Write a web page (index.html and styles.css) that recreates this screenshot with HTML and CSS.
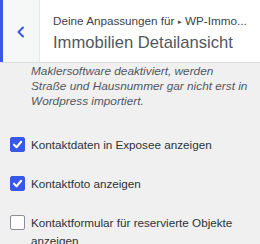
FILE: index.html
```html
<!DOCTYPE html>
<html lang="de">
<head>
<meta charset="utf-8">
<link rel="stylesheet" href="styles.css">
</head>
<body>
<div class="header">
  <div class="back">
    <svg width="10" height="14" viewBox="0 0 10 14"><path d="M7 2.5 L2.5 7 L7 11.5" fill="none" stroke="#3858e9" stroke-width="2" stroke-linecap="round" stroke-linejoin="round"/></svg>
  </div>
  <div class="titles">
    <div class="action">Deine Anpassungen für <span class="sep">▸</span> WP-Immo...</div>
    <div class="title">Immobilien Detailansicht</div>
  </div>
</div>
<div class="content">
  <p class="desc">Maklersoftware deaktiviert, werden Straße und Hausnummer gar nicht erst in Wordpress importiert.</p>
  <label class="row first"><span class="cb checked"><svg width="11" height="11" viewBox="0 0 12 12"><path d="M2.2 6.2 L5 9 L10 3" fill="none" stroke="#fff" stroke-width="2.2" stroke-linecap="round" stroke-linejoin="round"/></svg></span><span class="lbl">Kontaktdaten in Exposee anzeigen</span></label>
  <label class="row"><span class="cb checked"><svg width="11" height="11" viewBox="0 0 12 12"><path d="M2.2 6.2 L5 9 L10 3" fill="none" stroke="#fff" stroke-width="2.2" stroke-linecap="round" stroke-linejoin="round"/></svg></span><span class="lbl">Kontaktfoto anzeigen</span></label>
  <label class="row"><span class="cb"></span><span class="lbl">Kontaktformular für reservierte Objekte anzeigen</span></label>
</div>
</body>
</html>
```
FILE: styles.css
```css
html, body { margin: 0; padding: 0; }
body {
  width: 260px;
  height: 244px;
  overflow: hidden;
  background: #f0f0f1;
  font-family: "Liberation Sans", Arial, sans-serif;
  color: #1d2327;
}
.header {
  display: flex;
  height: 62px;
  background: #fff;
  border-bottom: 1px solid #dcdcde;
}
.back {
  flex: none;
  width: 36px;
  border-left: 3px solid #3858e9;
  border-right: 1px solid #e8e8ea;
  background: #f6f7f7;
  display: flex;
  align-items: center;
  justify-content: center;
}
.back svg { margin-left: -1px; margin-top: 1px; }
.titles {
  padding: 13px 0 0 13px;
  color: #50575e;
  white-space: nowrap;
  overflow: hidden;
}
.action { font-size: 11.7px; line-height: 16px; color: #3c434a; }
.sep { font-size: 7px; vertical-align: 1px; }
.title { font-size: 16.6px; line-height: 22px; margin-top: 2px; color: #50575e; }
.content { padding: 1px 10px 0 31px; }
.desc {
  margin: 0;
  font-style: italic;
  font-size: 11.8px;
  line-height: 15px;
  color: #50575e;
}
.row {
  display: flex;
  align-items: flex-start;
  margin-top: 21px;
  margin-left: -21px;
  font-size: 11.7px;
  line-height: 18px;
}
.row.first { margin-top: 27px; }
.cb {
  flex: none;
  box-sizing: border-box;
  width: 15px;
  height: 15px;
  margin-top: 1px;
  margin-right: 6px;
  border: 1px solid #8c8f94;
  border-radius: 2px;
  background: #fff;
  display: flex;
  align-items: center;
  justify-content: center;
}
.cb.checked { background: #3858e9; border-color: #3858e9; }
.lbl { color: #2c3338; }
```
